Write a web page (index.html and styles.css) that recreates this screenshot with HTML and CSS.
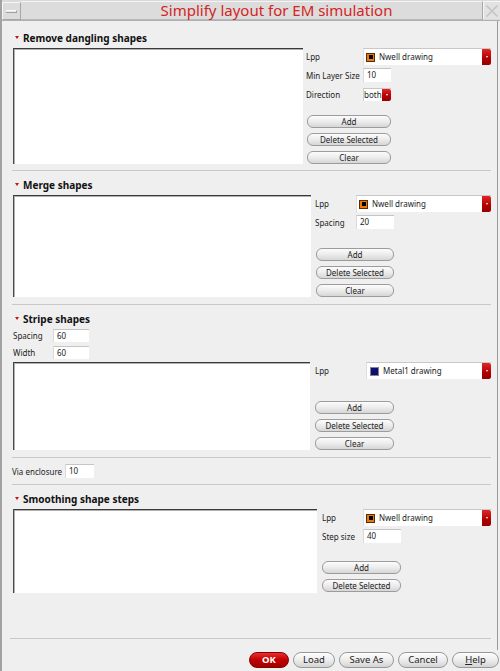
FILE: index.html
```html
<!DOCTYPE html>
<html>
<head>
<meta charset="utf-8">
<link rel="stylesheet" href="styles.css">
</head>
<body>
<div class="win">
  <div class="titlebar">
    <div class="tb-min"><span class="min-bar"></span></div>
    <div class="tb-title">Simplify layout for EM simulation</div>
    <div class="tb-close">
      <svg width="14" height="14" viewBox="0 0 14 14"><path d="M1.5 1.5 L12.5 12.5 M12.5 1.5 L1.5 12.5" stroke="#c4c4c4" stroke-width="1.6" fill="none"/></svg>
    </div>
  </div>

  <div class="main">
    <!-- Section 1 -->
    <div class="hdr s1-hdr"><span class="tri"></span>Remove dangling shapes</div>
    <div class="row">
      <div class="list l1"></div>
      <div class="side side1">
        <div class="field f-combo">
          <span class="lbl">Lpp</span>
          <div class="combo c1"><span class="swatch nwell"><span></span></span><span class="ctext">Nwell drawing</span><span class="drop"><i></i></span></div>
        </div>
        <div class="field f-input">
          <span class="lbl">Min Layer Size</span>
          <div class="input i1">10</div>
        </div>
        <div class="field f-dir">
          <span class="lbl">Direction</span>
          <div class="combo small"><span class="ctext">both</span><span class="drop"><i></i></span></div>
        </div>
        <div class="btns b1">
          <div class="btn">Add</div>
          <div class="btn">Delete Selected</div>
          <div class="btn">Clear</div>
        </div>
      </div>
    </div>
    <div class="sep sep1"></div>

    <!-- Section 2 -->
    <div class="hdr"><span class="tri"></span>Merge shapes</div>
    <div class="row">
      <div class="list l2"></div>
      <div class="side side2">
        <div class="field f-combo">
          <span class="lbl">Lpp</span>
          <div class="combo c2"><span class="swatch nwell"><span></span></span><span class="ctext">Nwell drawing</span><span class="drop"><i></i></span></div>
        </div>
        <div class="field f-input">
          <span class="lbl">Spacing</span>
          <div class="input i2">20</div>
        </div>
        <div class="btns b2">
          <div class="btn">Add</div>
          <div class="btn">Delete Selected</div>
          <div class="btn">Clear</div>
        </div>
      </div>
    </div>
    <div class="sep sep2"></div>

    <!-- Section 3 -->
    <div class="hdr"><span class="tri"></span>Stripe shapes</div>
    <div class="field f-top">
      <span class="lbl lbl3">Spacing</span>
      <div class="input i3">60</div>
    </div>
    <div class="field f-top f-top2">
      <span class="lbl lbl3">Width</span>
      <div class="input i3">60</div>
    </div>
    <div class="row row3">
      <div class="list l3"></div>
      <div class="side side3">
        <div class="field f-combo">
          <span class="lbl">Lpp</span>
          <div class="combo c3"><span class="swatch metal"></span><span class="ctext">Metal1 drawing</span><span class="drop"><i></i></span></div>
        </div>
        <div class="btns b3">
          <div class="btn">Add</div>
          <div class="btn">Delete Selected</div>
          <div class="btn">Clear</div>
        </div>
      </div>
    </div>
    <div class="sep sep3"></div>
    <div class="field f-via">
      <span class="lbl lblvia">Via enclosure</span>
      <div class="input ivia">10</div>
    </div>
    <div class="sep sep4"></div>

    <!-- Section 4 -->
    <div class="hdr"><span class="tri"></span>Smoothing shape steps</div>
    <div class="row">
      <div class="list l4"></div>
      <div class="side side4">
        <div class="field f-combo">
          <span class="lbl">Lpp</span>
          <div class="combo c4"><span class="swatch nwell"><span></span></span><span class="ctext">Nwell drawing</span><span class="drop"><i></i></span></div>
        </div>
        <div class="field f-input">
          <span class="lbl">Step size</span>
          <div class="input i2">40</div>
        </div>
        <div class="btns b4">
          <div class="btn">Add</div>
          <div class="btn">Delete Selected</div>
        </div>
      </div>
    </div>
    <div class="sep sep5"></div>
  </div>

  <div class="footer">
    <div class="fbtn ok">OK</div>
    <div class="fbtn w-load">Load</div>
    <div class="fbtn w-save">Save As</div>
    <div class="fbtn w-cancel">Cancel</div>
    <div class="fbtn w-help"><u>H</u>elp</div>
  </div>
</div>
</body>
</html>
```

FILE: styles.css
```css
* { box-sizing: border-box; }
html, body { margin: 0; padding: 0; }
body {
  width: 500px;
  height: 671px;
  overflow: hidden;
  background: #efefef;
  font-family: "Noto Sans", "Open Sans", sans-serif;
  font-size: 8px;
  color: #222;
}
.win {
  width: 500px;
  height: 671px;
  border-left: 2px solid #a2a2a2;
  display: flex;
  flex-direction: column;
}

/* Title bar */
.titlebar {
  height: 21px;
  flex: none;
  display: flex;
  background: #dadada;
  border-bottom: 1px solid #b0b0b0;
  padding: 1px 0 0 0;
}
.tb-min {
  width: 19px;
  height: 18px;
  margin-top: 1px;
  background: #dcdcdc;
  border-top: 1px solid #f6f6f6;
  border-left: 1px solid #f6f6f6;
  border-right: 1px solid #a6a6a6;
  border-bottom: 1px solid #a6a6a6;
  display: flex;
  align-items: center;
  justify-content: center;
}
.min-bar {
  width: 11px;
  height: 3px;
  background: #e8e8e8;
  border-top: 1px solid #fafafa;
  border-bottom: 1px solid #a0a0a0;
  border-right: 1px solid #a0a0a0;
}
.tb-title {
  flex: 1;
  height: 19px;
  background: #dcdcdc;
  border-top: 1px solid #f4f4f4;
  border-bottom: 1px solid #b8b8b8;
  border-right: 1px solid #a6a6a6;
  color: #d42424;
  font-size: 15px;
  line-height: 17px;
  text-align: center;
  padding-left: 50px;
  white-space: nowrap;
}
.tb-close {
  width: 17px;
  height: 18px;
  background: #e2e2e2;
  border-top: 1px solid #f6f6f6;
  border-left: 1px solid #f6f6f6;
  display: flex;
  align-items: center;
  justify-content: center;
}

/* Main body */
.main {
  height: 629px;
  flex: none;
  border-right: 1px solid #9a9a9a;
  width: 496px;
  padding: 0 6px 0 11px;
  display: flex;
  flex-direction: column;
}
.main > * { flex-shrink: 0; }

.hdr {
  height: 14px;
  line-height: 14px;
  font-size: 10px;
  font-weight: bold;
  color: #111;
  display: flex;
  align-items: center;
  margin-top: 7px;
  margin-bottom: 3px;
  white-space: nowrap;
}
.s1-hdr { margin-top: 10px; }
.tri {
  width: 0;
  height: 0;
  border-left: 2.5px solid transparent;
  border-right: 2.5px solid transparent;
  border-top: 3px solid #d01010;
  margin: 0 4px 1px 2px;
}

.row { display: flex; align-items: flex-start; }

.list {
  background: #fff;
  border-top: 1px solid #3a3a3a;
  border-left: 1px solid #4a4a4a;
  box-shadow: inset 1px 1px 0 #b0b0b0;
  flex: none;
}
.l1 { width: 290px; height: 116px; }
.l2 { width: 298px; height: 102px; }
.l3 { width: 297px; height: 88px; }
.l4 { width: 304px; height: 84px; }

.side { display: flex; flex-direction: column; flex: 1; }
.side1 { margin-left: 3px; }
.side2 { margin-left: 4px; }
.side3 { margin-left: 5px; }
.side4 { margin-left: 5px; }

.field { display: flex; align-items: center; }
.lbl { white-space: nowrap; color: #222; }
.side1 .lbl { width: 57px; }
.side2 .lbl, .side4 .lbl { width: 41px; }
.side3 .lbl { width: 51px; }

.f-combo { height: 17px; }
.f-input { height: 14px; margin-top: 3px; }
.f-dir { height: 13px; margin-top: 6px; }

.combo {
  height: 100%;
  flex: 1;
  background: #fff;
  border-top: 1px solid #c8c8c8;
  border-left: 1px solid #dedede;
  display: flex;
  align-items: center;
}
.combo.small { flex: 0 0 28px; border-left: 1px solid #d0d0d0; }
.ctext { flex: 1; white-space: nowrap; padding-left: 4px; line-height: 12px; }
.combo.small .ctext { padding-left: 0; }
.swatch {
  width: 9px;
  height: 9px;
  margin-left: 2px;
  flex: none;
  display: flex;
  align-items: center;
  justify-content: center;
}
.swatch.nwell {
  background: #e87a10;
  border: 1px solid #5a2a00;
}
.swatch.nwell span {
  width: 4px;
  height: 4px;
  background: #000;
}
.swatch.metal {
  background: #10106a;
  border: 1px solid #8080a0;
  margin-left: 3px;
}
.drop {
  width: 9px;
  height: 100%;
  flex: none;
  background: linear-gradient(#e02626, #b00000 60%, #980000);
  border-radius: 0 2px 2px 0;
  display: flex;
  align-items: center;
  justify-content: center;
}
.drop i {
  width: 0;
  height: 0;
  border-left: 1.5px solid transparent;
  border-right: 1.5px solid transparent;
  border-top: 2px solid #fff;
}

.input {
  height: 100%;
  background: #fff;
  border-top: 1px solid #c4c4c4;
  border-left: 1px solid #dadada;
  padding-left: 3px;
  line-height: 12px;
  flex: none;
}
.i1 { width: 28px; }
.i2 { width: 38px; }
.i3 { width: 36px; }
.ivia { width: 29px; }

.btns { display: flex; flex-direction: column; gap: 5px; }
.b1 { margin-top: 14px; margin-left: 1px; width: 84px; }
.b2 { margin-top: 19px; margin-left: 1px; width: 78px; }
.b3 { margin-top: 22px; width: 79px; }
.b4 { margin-top: 18px; width: 79px; }
.btn {
  height: 13px;
  line-height: 11px;
  text-align: center;
  border: 1px solid #9c9c9c;
  border-radius: 6px;
  background: linear-gradient(#fcfcfc, #ececec 50%, #d6d6d6);
  color: #222;
  white-space: nowrap;
}

.sep {
  height: 1px;
  background: #c8c8c8;
  margin-left: -1px;
}
.sep1 { margin-top: 6px; }
.sep2 { margin-top: 7px; }
.sep3 { margin-top: 7px; }
.sep4 { margin-top: 6px; }
.sep5 { margin-top: 45px; margin-left: -3px; }

.f-top { height: 13px; margin-top: 0; }
.f-top2 { margin-top: 4px; }
.lbl3 { width: 40px; }
.row3 { margin-top: 3px; }
.f-via { height: 14px; margin-top: 6px; margin-left: -1px; }
.lblvia { width: 53px; }

/* Footer */
.footer {
  height: 21px;
  flex: none;
  display: flex;
  justify-content: flex-end;
  gap: 4px;
  padding: 2px 1px 0 0;
}
.fbtn {
  height: 16px;
  line-height: 14px;
  font-size: 9.5px;
  text-align: center;
  border: 1px solid #989898;
  border-radius: 8px;
  background: linear-gradient(#fdfdfd, #ededed 50%, #d4d4d4);
  color: #222;
  white-space: nowrap;
}
.fbtn.ok {
  width: 40px;
  background: linear-gradient(#e83030, #c00000 50%, #a00000);
  border-color: #8a0000;
  color: #fff;
  font-weight: bold;
}
.w-load { width: 42px; }
.w-save { width: 55px; }
.w-cancel { width: 50px; }
.w-help { width: 47px; }
.fbtn u { text-decoration-thickness: 1px; text-underline-offset: 1px; }
```
